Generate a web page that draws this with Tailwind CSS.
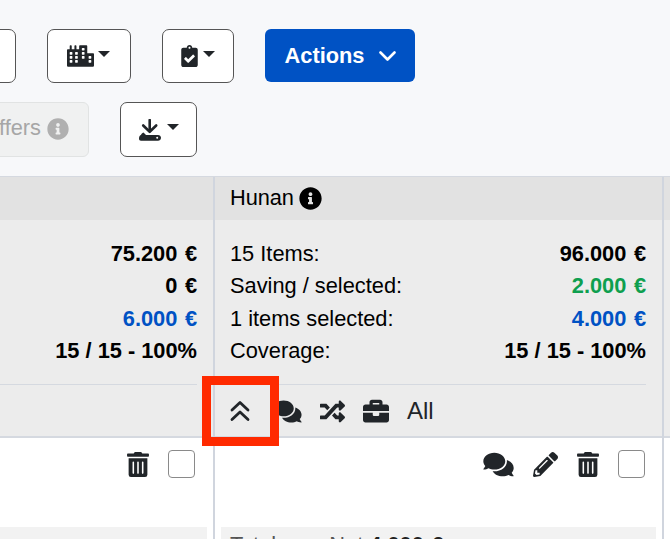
<!DOCTYPE html>
<html>
<head>
<meta charset="utf-8">
<script src="https://cdn.jsdelivr.net/npm/@tailwindcss/browser@4"></script>
</head>
<body class="m-0">
<div class="relative w-[670px] h-[539px] overflow-hidden bg-[#f7f8fa] font-['Liberation_Sans',Arial,sans-serif] text-[21.8px] leading-[32.5px] text-black">

  <!-- toolbar -->
  <div class="h-[176px] pt-[29px]">
    <div class="flex items-start gap-[31px] ml-[-40px]">
      <div class="w-[56px] h-[54px] bg-white border-[1.5px] border-[#555] rounded-[7px]"></div>
      <div class="w-[84px] h-[54px] bg-white border-[1.5px] border-[#555] rounded-[7px] flex items-center justify-center gap-[4px] pr-[1px]">
        <svg class="w-[27px] h-[22px]" viewBox="0 0 640 512" fill="#212529"><path d="M616 192H480V24c0-13.26-10.74-24-24-24H312c-13.26 0-24 10.74-24 24v72h-64V16c0-8.84-7.16-16-16-16h-16c-8.84 0-16 7.16-16 16v80h-64V16c0-8.84-7.16-16-16-16H80c-8.84 0-16 7.16-16 16v80H24c-13.26 0-24 10.74-24 24v360c0 17.67 14.33 32 32 32h576c17.67 0 32-14.33 32-32V216c0-13.26-10.75-24-24-24zM128 404c0 6.63-5.37 12-12 12H76c-6.63 0-12-5.37-12-12v-40c0-6.63 5.37-12 12-12h40c6.63 0 12 5.37 12 12v40zm0-96c0 6.63-5.37 12-12 12H76c-6.63 0-12-5.37-12-12v-40c0-6.63 5.37-12 12-12h40c6.63 0 12 5.37 12 12v40zm0-96c0 6.63-5.37 12-12 12H76c-6.63 0-12-5.37-12-12v-40c0-6.63 5.37-12 12-12h40c6.63 0 12 5.37 12 12v40zm128 192c0 6.63-5.37 12-12 12h-40c-6.63 0-12-5.37-12-12v-40c0-6.63 5.37-12 12-12h40c6.63 0 12 5.37 12 12v40zm0-96c0 6.63-5.37 12-12 12h-40c-6.63 0-12-5.37-12-12v-40c0-6.63 5.37-12 12-12h40c6.63 0 12 5.37 12 12v40zm0-96c0 6.63-5.37 12-12 12h-40c-6.63 0-12-5.37-12-12v-40c0-6.63 5.37-12 12-12h40c6.63 0 12 5.37 12 12v40zm160 96c0 6.63-5.37 12-12 12h-40c-6.63 0-12-5.37-12-12v-40c0-6.63 5.37-12 12-12h40c6.63 0 12 5.37 12 12v40zm0-96c0 6.63-5.37 12-12 12h-40c-6.63 0-12-5.37-12-12v-40c0-6.63 5.37-12 12-12h40c6.63 0 12 5.37 12 12v40zm0-96c0 6.63-5.37 12-12 12h-40c-6.63 0-12-5.37-12-12V76c0-6.63 5.37-12 12-12h40c6.63 0 12 5.37 12 12v40zm160 288c0 6.63-5.37 12-12 12h-40c-6.63 0-12-5.37-12-12v-40c0-6.63 5.37-12 12-12h40c6.630 0 12 5.37 12 12v40zm0-96c0 6.63-5.37 12-12 12h-40c-6.63 0-12-5.37-12-12v-40c0-6.63 5.37-12 12-12h40c6.63 0 12 5.37 12 12v40z"/></svg>
        <span class="w-0 h-0 border-x-[6px] border-x-transparent border-t-[6.5px] border-t-[#212529] mt-[-5px]"></span>
      </div>
      <div class="w-[72px] h-[54px] bg-white border-[1.5px] border-[#555] rounded-[7px] flex items-center justify-center gap-[5px]">
        <svg class="w-[17px] h-[22px]" viewBox="0 0 384 512" fill="#212529"><path d="M336 64h-80c0-35.3-28.7-64-64-64s-64 28.7-64 64H48C21.5 64 0 85.5 0 112v352c0 26.5 21.5 48 48 48h288c26.5 0 48-21.5 48-48V112c0-26.5-21.5-48-48-48zM192 40c13.3 0 24 10.7 24 24s-10.7 24-24 24-24-10.7-24-24 10.7-24 24-24zm121.2 231.8l-143 141.8c-4.7 4.7-12.3 4.6-17-.1l-82.6-83.3c-4.7-4.7-4.6-12.3.1-17L99.1 285c4.7-4.7 12.3-4.6 17 .1l46 46.4 106-105.2c4.7-4.7 12.3-4.6 17 .1l28.2 28.4c4.7 4.8 4.6 12.3-.1 17z"/></svg>
        <span class="w-0 h-0 border-x-[6px] border-x-transparent border-t-[6.5px] border-t-[#212529] mt-[-5px]"></span>
      </div>
      <div class="w-[150px] h-[53px] bg-[#0052c4] rounded-[6px] flex items-center justify-center gap-[15px] text-white font-bold">
        <span class="mt-[1px] ml-[1px]">Actions</span>
        <svg class="w-[17px] h-[10px]" viewBox="0 0 17 10" fill="none" stroke="white" stroke-width="2.6" stroke-linecap="round" stroke-linejoin="round"><polyline points="1.5,1.5 8.5,8.5 15.5,1.5"/></svg>
      </div>
    </div>
    <div class="flex items-start gap-[31px] mt-[19px] ml-[-40px]">
      <div class="w-[129px] h-[55px] bg-[#f0f1f1] border border-[#e1e3e3] rounded-[6px] flex items-center justify-end gap-[6px] pr-[19px] text-[#a6a6a6] whitespace-nowrap">
        <span class="mt-[-2px]">Offers</span>
        <svg class="w-[22px] h-[22px] mt-[-1px]" viewBox="0 0 512 512" fill="#b0b0b0"><path d="M256 8C119.043 8 8 119.083 8 256c0 136.997 111.043 248 248 248s248-111.003 248-248C504 119.083 392.957 8 256 8zm0 110c23.196 0 42 18.804 42 42s-18.804 42-42 42-42-18.804-42-42 18.804-42 42-42zm56 254c0 6.627-5.373 12-12 12h-88c-6.627 0-12-5.373-12-12v-24c0-6.627 5.373-12 12-12h12v-64h-12c-6.627 0-12-5.373-12-12v-24c0-6.627 5.373-12 12-12h64c6.627 0 12 5.373 12 12v100h12c6.627 0 12 5.373 12 12v24z"/></svg>
      </div>
      <div class="w-[77px] h-[55px] bg-white border-[1.5px] border-[#555] rounded-[7px] flex items-center justify-center gap-[6px]">
        <svg class="w-[22px] h-[22px]" viewBox="0 0 22 22" fill="none"><path d="M10.700 1v10.500" stroke="#212529" stroke-width="2.600" stroke-linecap="round"/><path d="M4.200 6.500l6.500 6.300 6.500-6.300" stroke="#212529" stroke-width="2.600" stroke-linecap="round" stroke-linejoin="round"/><path d="M2.500 16h16.500c1.600 0 3 1.100 3 2.800s-1.400 3-3 3H2c-1.200 0-2-.8-2-2 0-2.200.8-3.800 2.500-3.800z" fill="#212529"/><path d="M1.500 17c.6-1.600 1.500-3 3-3.400l2.500 2.400z" fill="#212529"/><circle cx="18.200" cy="18.800" r="1" fill="white"/></svg>
        <span class="w-0 h-0 border-x-[6px] border-x-transparent border-t-[6.5px] border-t-[#212529] mt-[-6px]"></span>
      </div>
    </div>
  </div>

  <!-- table -->
  <div class="grid grid-cols-[213px_451px_6px] border-t border-t-[#d5d9e0] h-[363px]">
    <!-- left column -->
    <div class="flex flex-col">
      <div class="h-[43px] bg-[#e2e2e2]"></div>
      <div class="h-[218px] bg-[#ececec] border-b-2 border-b-[#d5d9e0]">
        <div class="h-[165px] mr-[16px] pt-[17.500px] border-b border-b-[#d5d9e0] text-right font-bold">
          <div>75.200 <span class="ml-[1.500px]">€</span></div>
          <div>0 <span class="ml-[1.500px]">€</span></div>
          <div class="text-[#0052c4]">6.000 <span class="ml-[1.500px]">€</span></div>
          <div>15 / 15 - 100%</div>
        </div>
      </div>
      <div class="flex-1 bg-white">
        <div class="flex justify-end items-center gap-[19px] pr-[18px] pt-[12px]">
          <svg class="w-[22px] h-[25px]" viewBox="0 0 448 512" fill="#212529"><path d="M32 464a48 48 0 0 0 48 48h288a48 48 0 0 0 48-48V128H32zm272-256a16 16 0 0 1 32 0v224a16 16 0 0 1-32 0zm-96 0a16 16 0 0 1 32 0v224a16 16 0 0 1-32 0zm-96 0a16 16 0 0 1 32 0v224a16 16 0 0 1-32 0zM432 32H312l-9.400-18.700A24 24 0 0 0 281.100 0H166.800a23.720 23.720 0 0 0-21.400 13.300L136 32H16A16 16 0 0 0 0 48v32a16 16 0 0 0 16 16h416a16 16 0 0 0 16-16V48a16 16 0 0 0-16-16z"/></svg>
          <div class="w-[27px] h-[28px] border-[1.5px] border-[#8a8a8a] rounded-[4px] bg-white"></div>
        </div>
        <div class="mt-[49px] mr-[6px] h-[12px] bg-[#f2f2f2]"></div>
      </div>
    </div>
    <!-- right column -->
    <div class="flex flex-col border-x-2 border-x-[#d0d5de]">
      <div class="h-[43px] bg-[#e2e2e2] pl-[15px] flex items-center gap-[5px]">
        <span class="tracking-[-0.1px]">Hunan</span>
        <svg class="w-[23px] h-[23px]" viewBox="0 0 512 512" fill="#000"><path d="M256 8C119.043 8 8 119.083 8 256c0 136.997 111.043 248 248 248s248-111.003 248-248C504 119.083 392.957 8 256 8zm0 110c23.196 0 42 18.804 42 42s-18.804 42-42 42-42-18.804-42-42 18.804-42 42-42zm56 254c0 6.627-5.373 12-12 12h-88c-6.627 0-12-5.373-12-12v-24c0-6.627 5.373-12 12-12h12v-64h-12c-6.627 0-12-5.373-12-12v-24c0-6.627 5.373-12 12-12h64c6.627 0 12 5.373 12 12v100h12c6.627 0 12 5.373 12 12v24z"/></svg>
      </div>
      <div class="h-[218px] bg-[#ececec] border-b-2 border-b-[#d5d9e0] pl-[15px]">
        <div class="h-[165px] mr-[16px] pt-[17.500px] border-b border-b-[#d5d9e0]">
          <div class="flex justify-between"><span>15 Items:</span><b>96.000 <span class="ml-[1.500px]">€</span></b></div>
          <div class="flex justify-between"><span>Saving / selected:</span><b class="text-[#0e9f4f]">2.000 <span class="ml-[1.500px]">€</span></b></div>
          <div class="flex justify-between"><span>1 items selected:</span><b class="text-[#0052c4]">4.000 <span class="ml-[1.500px]">€</span></b></div>
          <div class="flex justify-between"><span>Coverage:</span><b>15 / 15 - 100%</b></div>
        </div>
        <div class="flex items-center h-[51px] pt-[1px] text-[#212529]">
          <svg class="w-[20px] h-[22px] mr-[23px]" viewBox="0 0 20 22" fill="none" stroke="#212529" stroke-width="2.800" stroke-linecap="round" stroke-linejoin="round"><polyline points="2,10 10,2.500 18,10"/><polyline points="2,19.500 10,12 18,19.500"/></svg>
          <svg class="w-[29px] h-[25px] mr-[18px]" viewBox="0 0 576 512" fill="#212529"><path d="M416 192c0-88.400-93.100-160-208-160S0 103.600 0 192c0 34.300 14.100 65.900 38 92-13.400 30.200-35.500 54.200-35.800 54.500-2.200 2.300-2.800 5.700-1.500 8.700S4.800 352 8 352c36.600 0 66.900-12.300 88.700-25 32.200 15.700 70.300 25 111.300 25 114.900 0 208-71.600 208-160zm122 220c23.900-26 38-57.700 38-92 0-66.900-53.500-124.200-129.300-148.100.9 6.600 1.300 13.300 1.300 20.100 0 105.900-107.700 192-240 192-10.800 0-21.300-.8-31.700-1.900C207.800 439.600 281.800 480 368 480c41 0 79.100-9.200 111.300-25 21.800 12.700 52.100 25 88.700 25 3.200 0 6.100-1.900 7.300-4.800 1.300-2.900.7-6.300-1.500-8.700-.3-.3-22.400-24.200-35.800-54.500z"/></svg>
          <svg class="w-[25px] h-[25px] mr-[18px]" viewBox="0 0 512 512" fill="#212529"><path d="M504.971 359.029c9.373 9.373 9.373 24.569 0 33.941l-80 79.984c-15.010 15.010-40.971 4.490-40.971-16.971V416h-58.785a12.004 12.004 0 0 1-8.773-3.812l-70.556-75.596 53.333-57.143L352 336h32v-39.981c0-21.438 25.943-31.998 40.971-16.971l80 79.981zM12 176h84l52.781 56.551 53.333-57.143-70.556-75.596A11.999 11.999 0 0 0 122.785 96H12c-6.627 0-12 5.373-12 12v56c0 6.627 5.373 12 12 12zm372 0v39.984c0 21.460 25.961 31.980 40.971 16.971l80-79.984c9.373-9.373 9.373-24.569 0-33.941l-80-79.981C409.943 24.021 384 34.582 384 56.019V96h-58.785a12.004 12.004 0 0 0-8.773 3.812L96 336H12c-6.627 0-12 5.373-12 12v56c0 6.627 5.373 12 12 12h110.785c3.326 0 6.503-1.381 8.773-3.812L352 176h32z"/></svg>
          <svg class="w-[26px] h-[26px] mr-[18px]" viewBox="0 0 512 512" fill="#212529"><path d="M320 336c0 8.840-7.160 16-16 16h-96c-8.840 0-16-7.160-16-16v-48H0v144c0 25.600 22.400 48 48 48h416c25.600 0 48-22.400 48-48V288H320v48zm144-208h-80V80c0-25.600-22.400-48-48-48H176c-25.600 0-48 22.400-48 48v48H48c-25.600 0-48 22.400-48 48v80h512v-80c0-25.600-22.400-48-48-48zm-144 0H192V96h128v32z"/></svg>
          <span class="text-[24px]">All</span>
        </div>
      </div>
      <div class="flex-1 bg-white">
        <div class="flex justify-end items-center pr-[17px] pt-[12px]">
          <svg class="w-[31px] h-[27px] mr-[19px]" viewBox="0 0 576 512" fill="#212529"><path d="M416 192c0-88.400-93.100-160-208-160S0 103.600 0 192c0 34.300 14.100 65.900 38 92-13.400 30.200-35.500 54.200-35.800 54.500-2.200 2.300-2.800 5.700-1.500 8.700S4.800 352 8 352c36.600 0 66.900-12.300 88.700-25 32.200 15.700 70.300 25 111.300 25 114.900 0 208-71.600 208-160zm122 220c23.900-26 38-57.700 38-92 0-66.900-53.500-124.200-129.300-148.100.9 6.600 1.300 13.300 1.300 20.100 0 105.900-107.700 192-240 192-10.800 0-21.300-.8-31.700-1.900C207.800 439.600 281.800 480 368 480c41 0 79.100-9.200 111.300-25 21.800 12.700 52.100 25 88.700 25 3.200 0 6.100-1.900 7.300-4.800 1.300-2.900.7-6.300-1.500-8.700-.3-.3-22.400-24.200-35.800-54.500z"/></svg>
          <svg class="w-[25px] h-[25px] mr-[19px]" viewBox="0 0 512 512" fill="#212529"><path d="M497.900 142.100l-46.100 46.100c-4.700 4.700-12.300 4.700-17 0l-111-111c-4.700-4.700-4.700-12.300 0-17l46.100-46.100c18.700-18.700 49.100-18.700 67.900 0l60.100 60.100c18.800 18.700 18.800 49.100 0 67.900zM284.200 99.800L21.600 362.400.4 483.900c-2.900 16.400 11.400 30.600 27.800 27.800l121.500-21.300 262.600-262.600c4.700-4.700 4.700-12.300 0-17l-111-111c-4.800-4.700-12.400-4.700-17.100 0zM124.100 339.900c-5.500-5.500-5.500-14.300 0-19.800l154-154c5.500-5.500 14.300-5.500 19.800 0s5.500 14.300 0 19.800l-154 154c-5.500 5.500-14.300 5.500-19.800 0zM88 424h48v36.300l-64.500 11.300-31.100-31.100L51.700 376H88v48z"/></svg>
          <svg class="w-[22px] h-[25px] mr-[19px]" viewBox="0 0 448 512" fill="#212529"><path d="M32 464a48 48 0 0 0 48 48h288a48 48 0 0 0 48-48V128H32zm272-256a16 16 0 0 1 32 0v224a16 16 0 0 1-32 0zm-96 0a16 16 0 0 1 32 0v224a16 16 0 0 1-32 0zm-96 0a16 16 0 0 1 32 0v224a16 16 0 0 1-32 0zM432 32H312l-9.400-18.700A24 24 0 0 0 281.100 0H166.800a23.720 23.720 0 0 0-21.400 13.300L136 32H16A16 16 0 0 0 0 48v32a16 16 0 0 0 16 16h416a16 16 0 0 0 16-16V48a16 16 0 0 0-16-16z"/></svg>
          <div class="w-[27px] h-[28px] border-[1.5px] border-[#8a8a8a] rounded-[4px] bg-white"></div>
        </div>
        <div class="mt-[49px] ml-[6px] mr-[6px] h-[12px] bg-[#f2f2f2] leading-[26px] pt-[5px] pl-[9px] whitespace-nowrap overflow-hidden text-[#555]">Total sum Net <b class="text-[#222]">4.000 <span class="ml-[1.500px]">€</span></b></div>
      </div>
    </div>
    <div class="flex flex-col">
      <div class="h-[43px] bg-[#e2e2e2]"></div>
      <div class="h-[218px] bg-[#ececec] border-b-2 border-b-[#d5d9e0]"></div>
      <div class="flex-1 bg-white"></div>
    </div>
  </div>

  <!-- red highlight -->
  <div class="absolute left-[202px] top-[376px] w-[77px] h-[70px] border-[9px] border-[#ff2a00]"></div>
</div>
</body>
</html>
